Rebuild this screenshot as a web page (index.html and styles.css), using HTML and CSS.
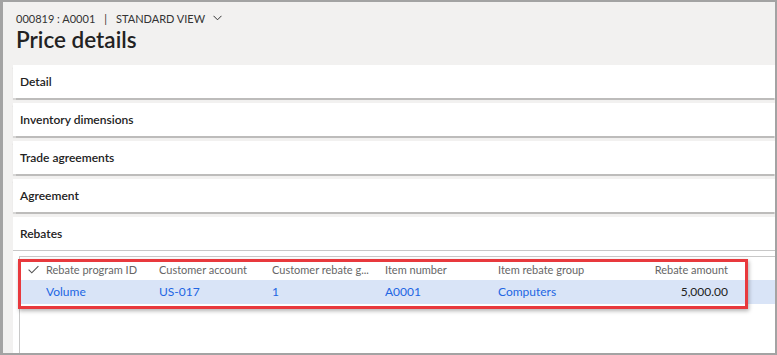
FILE: index.html
```html
<!DOCTYPE html>
<html>
<head>
    <meta charset="UTF-8">
    <title>Price details</title>
    <link rel="stylesheet" href="styles.css">
</head>
<body>
    <div class="frame">
        <header class="page-head">
            <div class="caption">
                <span>000819 : A0001</span>
                <span class="sep">|</span>
                <span>STANDARD VIEW</span>
                <svg class="chev" width="9" height="6" viewBox="0 0 9 6"><polyline points="0.5,0.8 4.5,4.8 8.5,0.8" fill="none" stroke="#333" stroke-width="1"/></svg>
            </div>
            <h1>Price details</h1>
        </header>

        <div class="tab">Detail</div>
        <div class="tab">Inventory dimensions</div>
        <div class="tab">Trade agreements</div>
        <div class="tab">Agreement</div>

        <div class="tab open">
            <div class="tab-title">Rebates</div>
            <div class="tab-body">
                <div class="grid">
                    <div class="row head">
                        <div class="cell check">
                            <svg width="11" height="9" viewBox="0 0 11 9"><polyline points="0.6,4.6 3.8,7.8 10.4,1.2" fill="none" stroke="#555" stroke-width="1.1"/></svg>
                        </div>
                        <div class="cell">Rebate program ID</div>
                        <div class="cell">Customer account</div>
                        <div class="cell">Customer rebate g...</div>
                        <div class="cell">Item number</div>
                        <div class="cell">Item rebate group</div>
                        <div class="cell num">Rebate amount</div>
                    </div>
                    <div class="row selected">
                        <div class="cell check"></div>
                        <div class="cell link">Volume</div>
                        <div class="cell link">US-017</div>
                        <div class="cell link">1</div>
                        <div class="cell link">A0001</div>
                        <div class="cell link">Computers</div>
                        <div class="cell num">5,000.00</div>
                    </div>
                    <div class="mark"></div>
                </div>
            </div>
        </div>
    </div>
</body>
</html>
```
FILE: styles.css
```css
html, body {
    margin: 0;
    padding: 0;
}

body {
    font-family: "Segoe UI", "Lato", "Open Sans", sans-serif;
    color: #333;
    background: #fff;
}

.frame {
    box-sizing: border-box;
    width: 777px;
    height: 355px;
    border: 2px solid #a3a3a3;
    border-left-width: 3px;
    background: #f2f1f0;
    padding: 0 0 0 10px;
    overflow: hidden;
}

.page-head {
    padding: 10px 0 0 3px;
    height: 63px;
    box-sizing: border-box;
}

.caption {
    font-size: 11px;
    line-height: 14px;
    color: #333;
    display: flex;
    align-items: center;
    gap: 4px;
}
.caption .sep { margin: 0 5px; }
.chev { margin-left: 4px; margin-top: -2px; }

h1 {
    margin: 0;
    font-size: 22.5px;
    font-weight: 600;
    line-height: 28px;
    color: #222;
}

.tab {
    background: #fff;
    height: 33px;
    margin-bottom: 5px;
    box-shadow: 0 1.5px 1px rgba(0,0,0,0.22);
    font-size: 12px;
    font-weight: 600;
    line-height: 33px;
    padding-left: 7px;
    color: #222;
}

.tab.open {
    height: auto;
    padding: 0;
    line-height: normal;
    margin-bottom: 0;
    box-shadow: none;
}
.tab-title {
    height: 33px;
    line-height: 33px;
    padding-left: 7px;
    border-bottom: 1px solid #c8c8c8;
}
.tab-body {
    height: 120px;
    padding: 5px 0 0 6px;
    font-weight: 400;
}

.grid {
    position: relative;
    border-top: 1px solid #c8c8c8;
    border-left: 1px solid #c8c8c8;
    height: 100px;
}

.row {
    display: flex;
    font-size: 12px;
}
.row.head {
    height: 23px;
    line-height: 25px;
    font-size: 11px;
    color: #666;
}
.row.selected {
    height: 24px;
    line-height: 24px;
    background: #d9e4f7;
}

.cell {
    width: 113px;
    flex: none;
    white-space: nowrap;
    overflow: hidden;
}
.cell.check {
    width: 26px;
    display: flex;
    align-items: center;
    justify-content: center;
    padding-top: 2px;
    box-sizing: border-box;
}
.cell.num {
    width: 120px;
    text-align: right;
    padding-right: 3px;
    box-sizing: border-box;
    color: #222;
}
.row.head .cell.num { color: #666; }
.cell.link { color: #2266e3; }

.mark {
    position: absolute;
    left: -2px;
    top: 2px;
    width: 724px;
    height: 44px;
    border: 3px solid #e8393d;
    box-shadow: 1px 2px 4px rgba(0,0,0,0.3);
}
```
